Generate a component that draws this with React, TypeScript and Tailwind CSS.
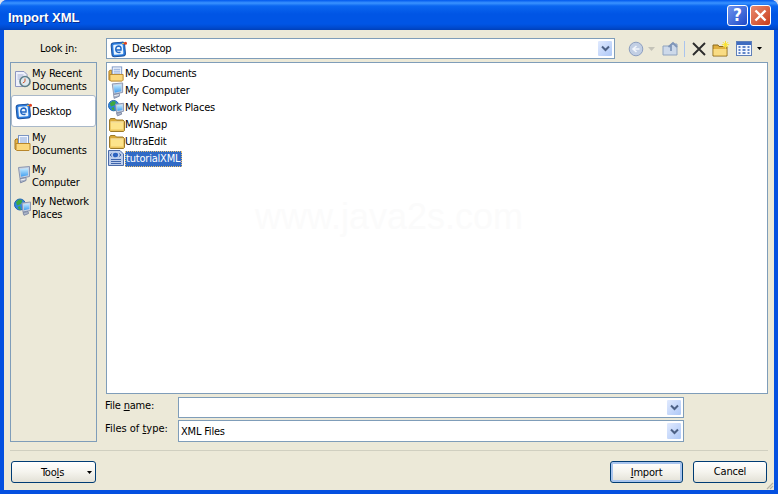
import React from "react";

const Folder = () => (
  <svg width="16" height="15" viewBox="0 0 16 15">
    <path d="M0.5 3 L1.5 1.5 H6 L7.5 3 H14 L15.5 4.5 V13.5 L14.5 14.5 H1.5 L0.5 13.5 Z" fill="#d9a93a" stroke="#9c7a2a" />
    <path d="M1.5 5.5 H14.5 V13.5 H1.5 Z" fill="#fde48c" />
    <path d="M1.5 5 H14.5" stroke="#fff6cc" />
    <path d="M1.5 13 H14.5" stroke="#eec65c" />
  </svg>
);
const DocsFolder = () => (
  <svg width="18" height="18" viewBox="0 0 18 18">
    <path d="M1 6 L2 5 H4 V14 H14 V16 H2 L1 15 Z" fill="#e8b84a" stroke="#a9781c" />
    <rect x="4.5" y="1.5" width="10" height="10" fill="#f4f8ff" stroke="#7a95c4" />
    <path d="M6 4h7M6 6h7M6 8h7" stroke="#86a4d8" />
    <path d="M2 9.5 H16 V15.5 L15 16.5 H3 L2 15.5 Z" fill="#fbd77c" stroke="#b8862a" />
  </svg>
);
const Computer = () => (
  <svg width="18" height="18" viewBox="0 0 18 18">
    <defs>
      <linearGradient id="scr" x1="0" y1="0" x2="0" y2="1">
        <stop offset="0" stopColor="#c6ecff" />
        <stop offset="1" stopColor="#3f9df0" />
      </linearGradient>
    </defs>
    <path d="M4.5 1.5 L15.5 0.5 V10.5 L6 12.5 Z" fill="#c9d2e2" stroke="#8a96b0" />
    <path d="M6 3 L14 2.2 V9.3 L7 10.8 Z" fill="url(#scr)" />
    <path d="M6 12.6 L12 11.5 L12 14.5 L6.5 16.8 Z" fill="#aeb7c9" stroke="#7d89a6" />
    <path d="M6.5 14 L11.5 13" stroke="#f0f2f6" />
  </svg>
);
const Network = () => (
  <svg width="18" height="18" viewBox="0 0 18 18">
    <defs>
      <linearGradient id="scr2" x1="0" y1="0" x2="0" y2="1">
        <stop offset="0" stopColor="#c6ecff" />
        <stop offset="1" stopColor="#3f9df0" />
      </linearGradient>
    </defs>
    <circle cx="6" cy="6.5" r="5.5" fill="#2f86de" stroke="#2567ae" />
    <path d="M2 4 L5 1.5 L8.5 2.5 L7 6 L3 7.5 Z" fill="#3fa83f" />
    <path d="M3.5 9 L6 8 L7 11.5 L5 11.5 Z" fill="#3fa83f" />
    <path d="M8 5 L16.5 4 V12.5 L9 14 Z" fill="#c9d2e2" stroke="#8a96b0" />
    <path d="M9.5 6.3 L15.3 5.5 V11 L10 12.3 Z" fill="url(#scr2)" />
    <path d="M9 14.5 L14 13.5 L14.5 15.5 L10 17.3 Z" fill="#aeb7c9" stroke="#7d89a6" />
  </svg>
);
const Desktop = () => (
  <svg width="18" height="18" viewBox="0 0 18 18">
    <rect x="1.5" y="2.5" width="13.5" height="14" rx="2.5" fill="#2b7ee0" stroke="#1a4f9c" transform="rotate(-5 8 9)" />
    <rect x="3.5" y="4.5" width="9.5" height="10" rx="1" fill="#eaf5ff" transform="rotate(-5 8 9)" />
    <path d="M5.5 10 H11 Q11.5 6 8.5 6 Q5.5 6.5 5.8 10 Q6.2 13 10.5 12.3" stroke="#1f66c4" strokeWidth="1.5" fill="none" />
    <path d="M12 3.5 L16 3" stroke="#f0c040" strokeWidth="1.2" />
    <circle cx="15.5" cy="3.2" r="1.5" fill="#e2401f" />
  </svg>
);
const XmlFile = () => (
  <svg width="17" height="17" viewBox="0 0 17 17">
    <path d="M0.5 0.5 H12 L15.5 4 V15.5 H0.5 Z" fill="#bccdec" stroke="#4a6aa8" />
    <ellipse cx="7.5" cy="5" rx="2.6" ry="2.3" fill="#2b62c0" />
    <path d="M3.5 3.5 L2.3 5 L3.5 6.5 M11.5 3.5 L12.7 5 L11.5 6.5" stroke="#2b4f98" fill="none" />
    <path d="M3 9.5 H13 M3 11.5 H13 M3 13.5 H13" stroke="#3e64ac" />
  </svg>
);
const Recent = () => (
  <svg width="18" height="18" viewBox="0 0 18 18">
    <path d="M1.5 1.5 H10 L13 4.5 V16.5 H1.5 Z" fill="#eef1fb" stroke="#8d96c0" />
    <path d="M3.5 5h6M3.5 7h6M3.5 9h3" stroke="#a8b2d6" />
    <circle cx="11" cy="11.5" r="5" fill="#dfeaf0" stroke="#5f7f88" strokeWidth="1.6" />
    <path d="M11 8.5 V11.5 L8.8 13" stroke="#d0552a" fill="none" />
  </svg>
);
const Chevron = () => (
  <svg width="9" height="7" viewBox="0 0 9 7">
    <path d="M1 1.5 L4.5 5 L8 1.5" stroke="#4d6185" strokeWidth="2" fill="none" />
  </svg>
);
const DropBtn = ({ h }: { h: string }) => (
  <div className={`w-[16px] ${h} mr-px rounded-[2px] border border-white bg-gradient-to-br from-[#e1eafe] to-[#aec8f7] flex items-center justify-center`}>
    <Chevron />
  </div>
);
const U = ({ children }: { children: string }) => <span className="underline">{children}</span>;

const sidebar = [
  { icon: <Recent />, lines: ["My Recent", "Documents"] },
  { icon: <Desktop />, lines: ["Desktop"], selected: true },
  { icon: <DocsFolder />, lines: ["My", "Documents"] },
  { icon: <Computer />, lines: ["My", "Computer"] },
  { icon: <Network />, lines: ["My Network", "Places"] },
];
const files = [
  { icon: <DocsFolder />, name: "My Documents" },
  { icon: <Computer />, name: "My Computer" },
  { icon: <Network />, name: "My Network Places" },
  { icon: <Folder />, name: "MWSnap" },
  { icon: <Folder />, name: "UltraEdit" },
];

const Btn = ({ children, cls = "", w }: { children: React.ReactNode; cls?: string; w: string }) => (
  <div className={`${w} h-[22px] rounded-[3px] border border-[#003c74] bg-gradient-to-b from-white via-[#f5f4ee] to-[#e3e1d6] flex items-center justify-center relative ${cls}`}>
    {children}
  </div>
);

export default function App() {
  return (
    <div className="w-[778px] h-[494px] overflow-hidden bg-[#dfe3ee]">
      <div className="w-[778px] h-[494px] rounded-t-[7px] bg-[#0450e0] flex flex-col text-[11px] leading-[13px] tracking-[-0.2px] text-black font-['DejaVu_Sans_Condensed','Liberation_Sans',sans-serif]">
        <div className="h-[30px] shrink-0 rounded-t-[7px] bg-[linear-gradient(to_bottom,#0058ee_0px,#3a93ff_3px,#0a66f0_6px,#0055e5_14px,#0055e5_24px,#0049cc_28px,#0040b8_30px)] flex items-center pl-[8px] pr-[7px]">
          <span className="text-white font-bold text-[13px] tracking-normal flex-1 pt-[4px] font-['Liberation_Sans',sans-serif] [text-shadow:1px_1px_0_#0a2f90]">Import XML</span>
          <div className="flex gap-[2px]">
            <div className="w-[21px] h-[21px] rounded-[3px] border border-white bg-gradient-to-br from-[#6f93ee] to-[#1f47c8] text-white font-bold text-[17px] tracking-normal flex items-center justify-center">?</div>
            <div className="w-[21px] h-[21px] rounded-[3px] border border-white bg-gradient-to-br from-[#e98a6e] to-[#c83a14] flex items-center justify-center">
              <svg width="13" height="13" viewBox="0 0 13 13"><path d="M1.5 1.5 L11.5 11.5 M11.5 1.5 L1.5 11.5" stroke="#fff" strokeWidth="2.4" /></svg>
            </div>
          </div>
        </div>
        <div className="mx-[4px] h-[460px] shrink-0 bg-[#ece9d8] pt-[8px] px-[6px] flex flex-col relative">
          <div className="flex h-[21px] items-center">
            <span className="w-[96px] pl-[30px]">Look <U>i</U>n:</span>
            <div className="w-[509px] h-[21px] bg-white border border-[#7f9db9] flex items-center">
              <div className="ml-[3px] mr-[3px] w-[18px] h-[18px] shrink-0"><Desktop /></div>
              <span className="flex-1 pl-px">Desktop</span>
              <DropBtn h="h-[17px]" />
            </div>
            <div className="flex items-center ml-[13px]">
              <svg width="16" height="16" viewBox="0 0 16 16"><circle cx="8" cy="8" r="6.8" fill="#c2cfe4" stroke="#8d9fc0" /><path d="M11.5 8 H6 M8.5 5 L5 8 L8.5 11" stroke="#f2f6fc" strokeWidth="1.6" fill="none" /></svg>
              <svg className="ml-[4px]" width="7" height="4" viewBox="0 0 7 4"><path d="M0 0 H7 L3.5 4 Z" fill="#c4c3b8" /></svg>
              <svg className="ml-[7px]" width="17" height="16" viewBox="0 0 17 16"><path d="M1 5 H8 L9 3 H15 V14 H1 Z" fill="#cdd9ea" stroke="#8fa3bf" /><path d="M9 10 V4 M6.5 6 L11 2 L15 6" stroke="#7f95b8" strokeWidth="1.8" fill="none" /></svg>
              <div className="w-px h-[16px] bg-[#aac4ee] ml-[5px]" />
              <svg className="ml-[7px]" width="14" height="14" viewBox="0 0 14 14"><path d="M1 1 L13 13 M13 1 L1 13" stroke="#2c2c2c" strokeWidth="1.9" /></svg>
              <svg className="ml-[6px]" width="18" height="16" viewBox="0 0 18 16"><path d="M1 4 H6 L7 5.5 H15 V15 H1 Z" fill="#e0b040" stroke="#8c6a1c" /><path d="M1.5 8 H14.5 V14.5 H1.5 Z" fill="#f9dc84" /><circle cx="13.5" cy="3.7" r="2.2" fill="#fff9b0" /><path d="M13.5 0 V7.5 M9.8 3.7 H17.2 M11 1.2 L16 6.2 M16 1.2 L11 6.2" stroke="#f8e030" /></svg>
              <svg className="ml-[6px]" width="16" height="15" viewBox="0 0 16 15"><rect x="0.5" y="0.5" width="15" height="14" fill="#f5f8ff" stroke="#5f7fb8" /><rect x="1" y="1" width="14" height="3" fill="#3f6cc0" /><path d="M2.5 6h2M6.5 6h3M11.5 6h2M2.5 9h2M6.5 9h3M11.5 9h2M2.5 12h2M6.5 12h3M11.5 12h2" stroke="#2f5fb8" strokeWidth="1.4" /></svg>
              <svg className="ml-[5px]" width="5" height="3" viewBox="0 0 5 3"><path d="M0 0 H5 L2.5 3 Z" fill="#000" /></svg>
            </div>
          </div>
          <div className="flex gap-[9px] mt-[3px] h-[380px]">
            <div className="w-[87px] shrink-0 bg-[#ece9d8] border border-[#7f9db9] flex flex-col">
              {sidebar.map((s, i) => (
                <div key={i} className={`h-[32px] flex items-center pl-[2px] ${s.selected ? "bg-white rounded-[3px] border border-[#a9b8c9] pl-[1px] gap-[1px]" : "gap-[2px]"}`}>
                  <div className="w-[16px] h-[18px] shrink-0 ml-[1px]">{s.icon}</div>
                  <div className={s.selected ? "" : "pt-[1px]"}>{s.lines.map((l) => <div key={l}>{l}</div>)}</div>
                </div>
              ))}
            </div>
            <div className="flex-1 flex flex-col min-w-0">
              <div className="h-[332px] bg-white border border-[#7f9db9] pt-[2px] pl-[1px] relative overflow-hidden">
                {files.map((f) => (
                  <div key={f.name} className="h-[17px] flex items-center">
                    <div className="w-[17px] h-[17px] shrink-0 flex items-center justify-center">{f.icon}</div>
                    <span>{f.name}</span>
                  </div>
                ))}
                <div className="h-[17px] flex items-center">
                  <div className="w-[17px] h-[17px] shrink-0"><XmlFile /></div>
                  <span className="h-[16px] leading-[14px] bg-[#316ac5] text-white border border-dotted border-[#e8c070] pr-px">tutorialXML</span>
                </div>
                <span className="absolute left-[148px] top-[136px] text-[36px] leading-[36px] tracking-normal text-[#fbfbfb] font-['Liberation_Sans',sans-serif]">www.java2s.com</span>
              </div>
              <div className="flex items-center h-[21px] mt-[3px]">
                <span className="w-[72px] -mt-[5px] -ml-px mr-px">File <U>n</U>ame:</span>
                <div className="w-[506px] h-[21px] bg-white border border-[#7f9db9] flex items-center justify-end">
                  <DropBtn h="h-[17px]" />
                </div>
              </div>
              <div className="flex items-center h-[22px] mt-[2px]">
                <span className="w-[72px] -mt-[5px] -ml-px mr-px tracking-normal">Files of <U>t</U>ype:</span>
                <div className="w-[506px] h-[22px] bg-white border border-[#7f9db9] flex items-center pl-[2px]">
                  <span className="flex-1">XML Files</span>
                  <DropBtn h="h-[18px]" />
                </div>
              </div>
            </div>
          </div>
          <div className="h-px bg-[#d0cfc0] mt-[8px]" />
          <div className="flex items-center mt-[10px] pl-px">
            <Btn w="w-[85px]">
              <span className="pr-[2px]">Too<U>l</U>s</span>
              <svg className="absolute right-[3px] top-[9px]" width="5" height="3" viewBox="0 0 5 3"><path d="M0 0 H5 L2.5 3 Z" fill="#000" /></svg>
            </Btn>
            <div className="flex-1" />
            <Btn w="w-[73px]" cls="shadow-[inset_0_0_0_2px_#a9c5ee]"><span><U>I</U>mport</span></Btn>
            <Btn w="w-[74px]" cls="ml-[10px] mr-px"><span className="-mt-[2px]">Cancel</span></Btn>
          </div>
          <svg className="absolute right-0 bottom-0" width="8" height="8" viewBox="0 0 8 8"><path d="M7 1 L1 7 M7 4 L4 7" stroke="#b5b2a3" strokeWidth="1.2" /></svg>
        </div>
      </div>
    </div>
  );
}
